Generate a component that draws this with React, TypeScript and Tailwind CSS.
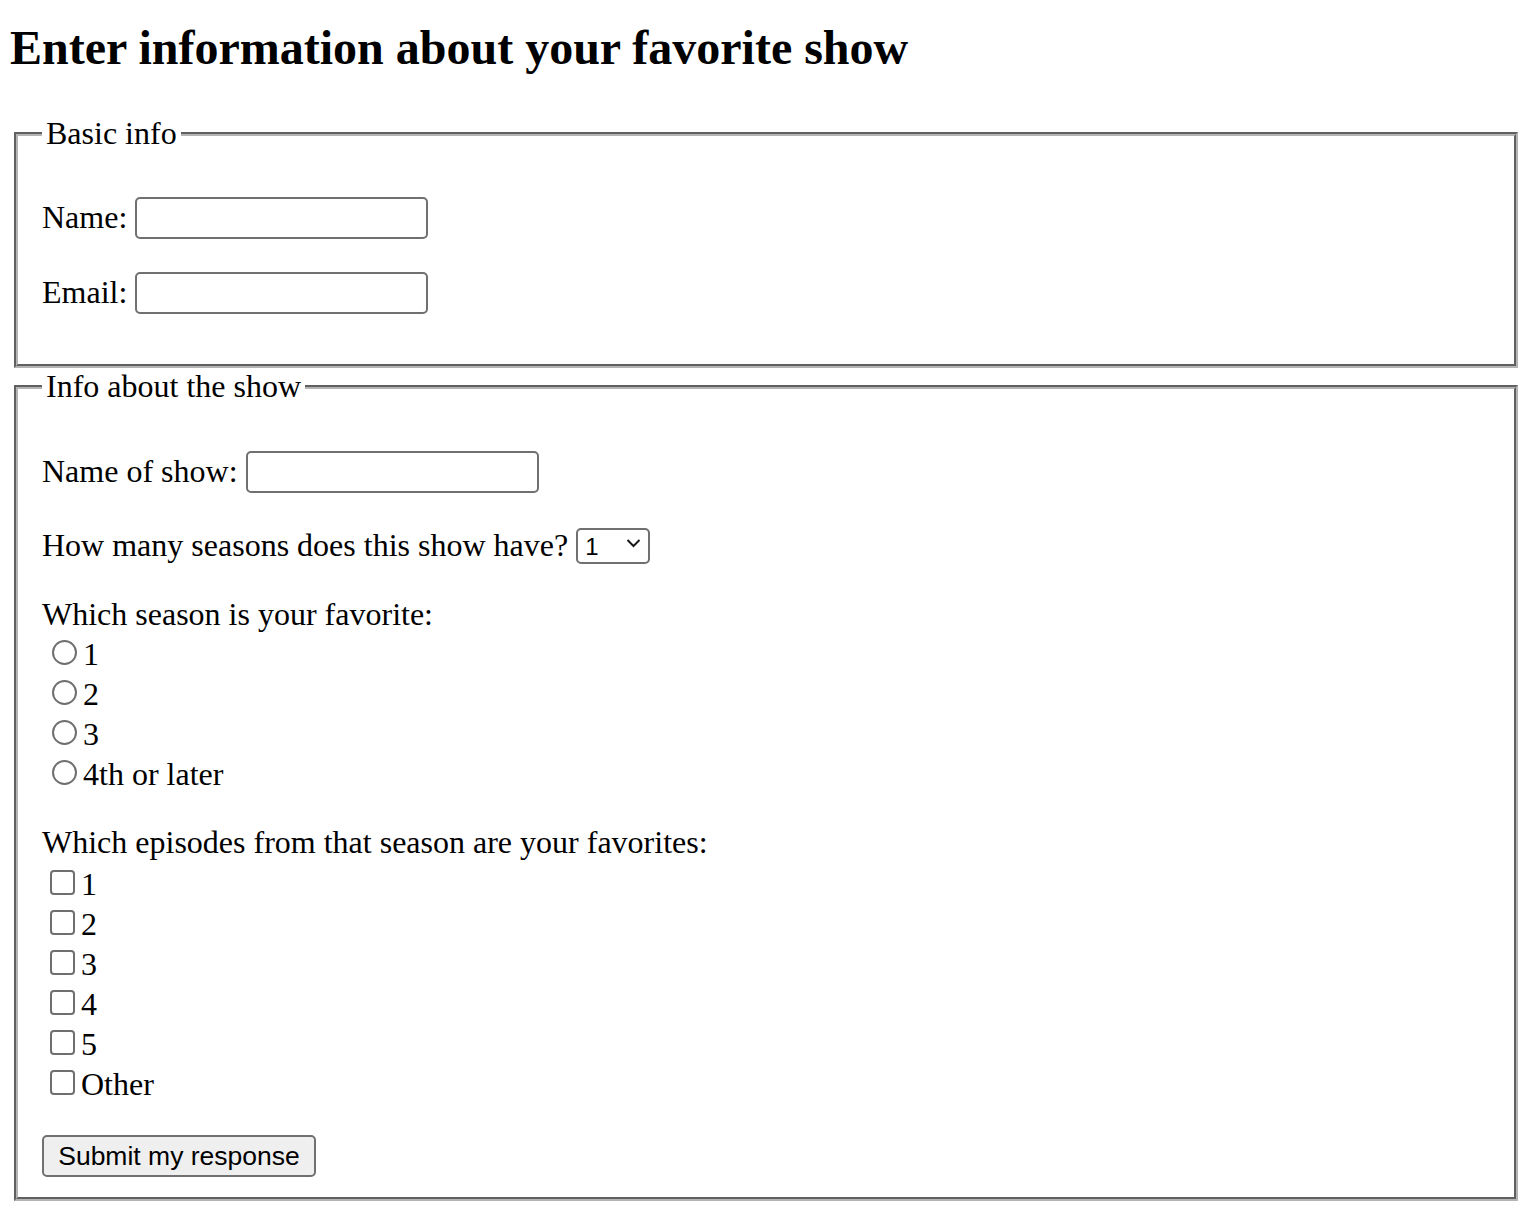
import React from "react";

function TextRow({ label }: { label: string }) {
  return (
    <label className="flex h-[42px] items-center gap-[8px]">
      <span className="pb-[2px]">{label}</span>
      <input
        type="text"
        className="h-[42px] w-[293px] rounded-[5px] border-2 border-[#707070] bg-white px-[4px] text-[26px] outline-none"
      />
    </label>
  );
}

export default function App() {
  const seasons = ["1", "2", "3", "4th or later"];
  const episodes = ["1", "2", "3", "4", "5", "Other"];

  return (
    <div className="min-h-screen bg-white pl-[10px] pr-[12px] pt-[20px] font-['Liberation_Serif','Times_New_Roman',serif] text-[32px] leading-[normal] text-black">
      <h2 className="mb-[40px] text-[48px] font-bold">
        Enter information about your favorite show
      </h2>

      <form onSubmit={(e) => e.preventDefault()}>
        <fieldset className="mx-[4px] border-4 border-[#b4b4b4] px-[24px] pb-[20px] pt-[11px] [border-style:groove]">
          <legend className="px-[4px]">Basic info</legend>
          <div className="mb-[30px] mt-[34px] flex flex-col gap-[33px]">
            <TextRow label="Name:" />
            <TextRow label="Email:" />
          </div>
        </fieldset>

        <fieldset className="mx-[4px] border-4 border-[#b4b4b4] px-[24px] pb-[20px] pt-[11px] [border-style:groove]">
          <legend className="px-[4px]">Info about the show</legend>

          <div className="mt-[35px]">
            <TextRow label="Name of show:" />
          </div>

          <div className="mt-[31px] flex h-[42px] items-center gap-[8px]">
            <span>How many seasons does this show have?</span>
            <div className="relative">
              <select className="h-[36px] w-[74px] appearance-none rounded-[5px] border-2 border-[#707070] bg-white pl-[7px] font-['Liberation_Sans',Arial,sans-serif] text-[24px] outline-none">
                <option>1</option>
                <option>2</option>
                <option>3</option>
                <option>4</option>
                <option>5+</option>
              </select>
              <svg
                className="pointer-events-none absolute right-[9px] top-[12px]"
                width="15"
                height="10"
                viewBox="0 0 15 10"
                fill="none"
              >
                <path d="M1.5 2 L7.5 8 L13.5 2" stroke="#1a1a1a" strokeWidth="2" />
              </svg>
            </div>
          </div>

          <div className="mt-[30px]">Which season is your favorite:</div>
          <div className="flex flex-col">
            {seasons.map((s) => (
              <label key={s} className="flex h-[40px] items-center">
                <input
                  type="radio"
                  name="season"
                  className="ml-[10px] mr-[6px] -mt-[2px] h-[25px] w-[25px] appearance-none rounded-full border-2 border-[#6f6f6f] bg-white"
                />
                <span className="pt-[3px]">{s}</span>
              </label>
            ))}
          </div>

          <div className="mt-[31px]">
            Which episodes from that season are your favorites:
          </div>
          <div className="flex flex-col">
            {episodes.map((ep) => (
              <label key={ep} className="flex h-[40px] items-center pt-[3px]">
                <input
                  type="checkbox"
                  className="ml-[8px] mr-[6px] h-[25px] w-[25px] appearance-none rounded-[4px] border-2 border-[#6f6f6f] bg-white"
                />
                <span className="pt-[3px]">{ep}</span>
              </label>
            ))}
          </div>

          <button
            type="submit"
            className="mt-[34px] flex h-[42px] w-[274px] items-center justify-center rounded-[5px] border-2 border-[#707070] bg-[#efefef] font-['Liberation_Sans',Arial,sans-serif] text-[26.5px] text-black"
          >
            Submit my response
          </button>
        </fieldset>
      </form>
    </div>
  );
}
